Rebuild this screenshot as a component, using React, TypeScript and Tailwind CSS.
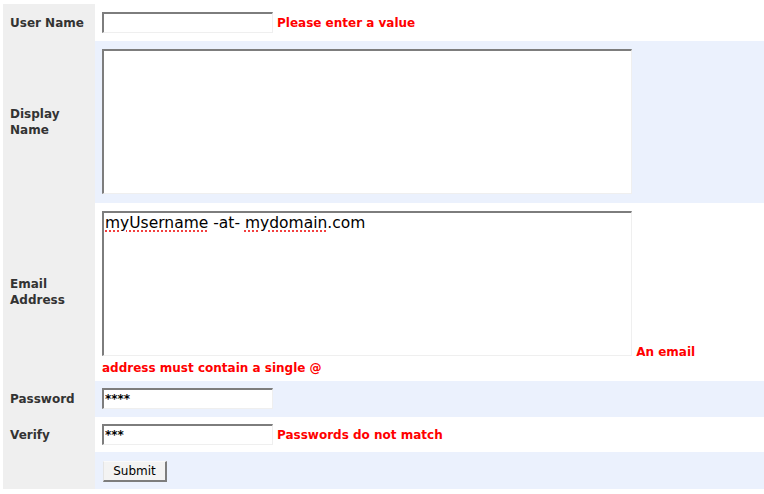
const label = 'bg-[#efefef] flex items-center pl-[7px] pr-1 text-[12px] font-bold leading-4 text-[#333]';
const field =
  'border-t-2 border-l-2 border-r border-b border-t-[#7d7d7d] border-l-[#7d7d7d] border-r-[#efefef] border-b-[#efefef] bg-white';
const error = 'text-[12px] font-bold leading-4 text-[#f00]';

function TextField({ value = '' }: { value?: string }) {
  return (
    <input
      readOnly
      value={value}
      className={`${field} block w-[171px] h-[21px] px-px text-[12px] font-bold text-black outline-none font-['DejaVu_Sans',sans-serif]`}
    />
  );
}

export default function App() {
  return (
    <div className="bg-white min-h-[494px] pt-[4px] pl-[3px] font-['DejaVu_Sans',sans-serif]">
      <div className="grid w-[761px] grid-cols-[92px_1fr] grid-rows-[37px_162px_178px_36px_35px_37px]">
        {/* User Name */}
        <div className={label}>User Name</div>
        <div className="bg-white pl-[7px] pt-2">
          <div className="flex items-center gap-1">
            <TextField />
            <span className={error}>Please enter a value</span>
          </div>
        </div>

        {/* Display Name */}
        <div className={label}>Display Name</div>
        <div className="bg-[#ebf1fd] pl-[7px] pt-2">
          <div className={`${field} w-[530px] h-[145px]`} />
        </div>

        {/* Email */}
        <div className={label}>Email Address</div>
        <div className="bg-white pl-[7px] pt-2 text-[12px] leading-4">
          <div
            className={`${field} inline-block overflow-hidden align-baseline w-[530px] h-[145px] pt-px pl-px text-[15.5px] leading-[18px] text-black`}
          >
            <span className="underline decoration-dotted decoration-[#e00] underline-offset-[3px]">myUsername</span>{' '}
            -at-{' '}
            <span className="underline decoration-dotted decoration-[#e00] underline-offset-[3px]">mydomain</span>.com
          </div>
          <span className={error}>
            {' '}An email
            <br />
            address must contain a single @
          </span>
        </div>

        {/* Password */}
        <div className={label}>Password</div>
        <div className="bg-[#ebf1fd] pl-[7px] pt-[7px]">
          <TextField value="****" />
        </div>

        {/* Verify */}
        <div className={label}>Verify</div>
        <div className="bg-white pl-[7px] pt-[7px]">
          <div className="flex items-center gap-1">
            <TextField value="***" />
            <span className={error}>Passwords do not match</span>
          </div>
        </div>

        {/* Submit */}
        <div className="bg-[#efefef]" />
        <div className="bg-[#ebf1fd] pl-2 pt-[9px]">
          <button className="block w-[64px] h-[21px] bg-[#f3f3f3] border-t border-l border-r-2 border-b-2 border-t-[#fafafa] border-l-[#e4e4e4] border-r-[#7d7d7d] border-b-[#7d7d7d] text-[12px] leading-none text-black font-['DejaVu_Sans',sans-serif]">
            Submit
          </button>
        </div>
      </div>
    </div>
  );
}
